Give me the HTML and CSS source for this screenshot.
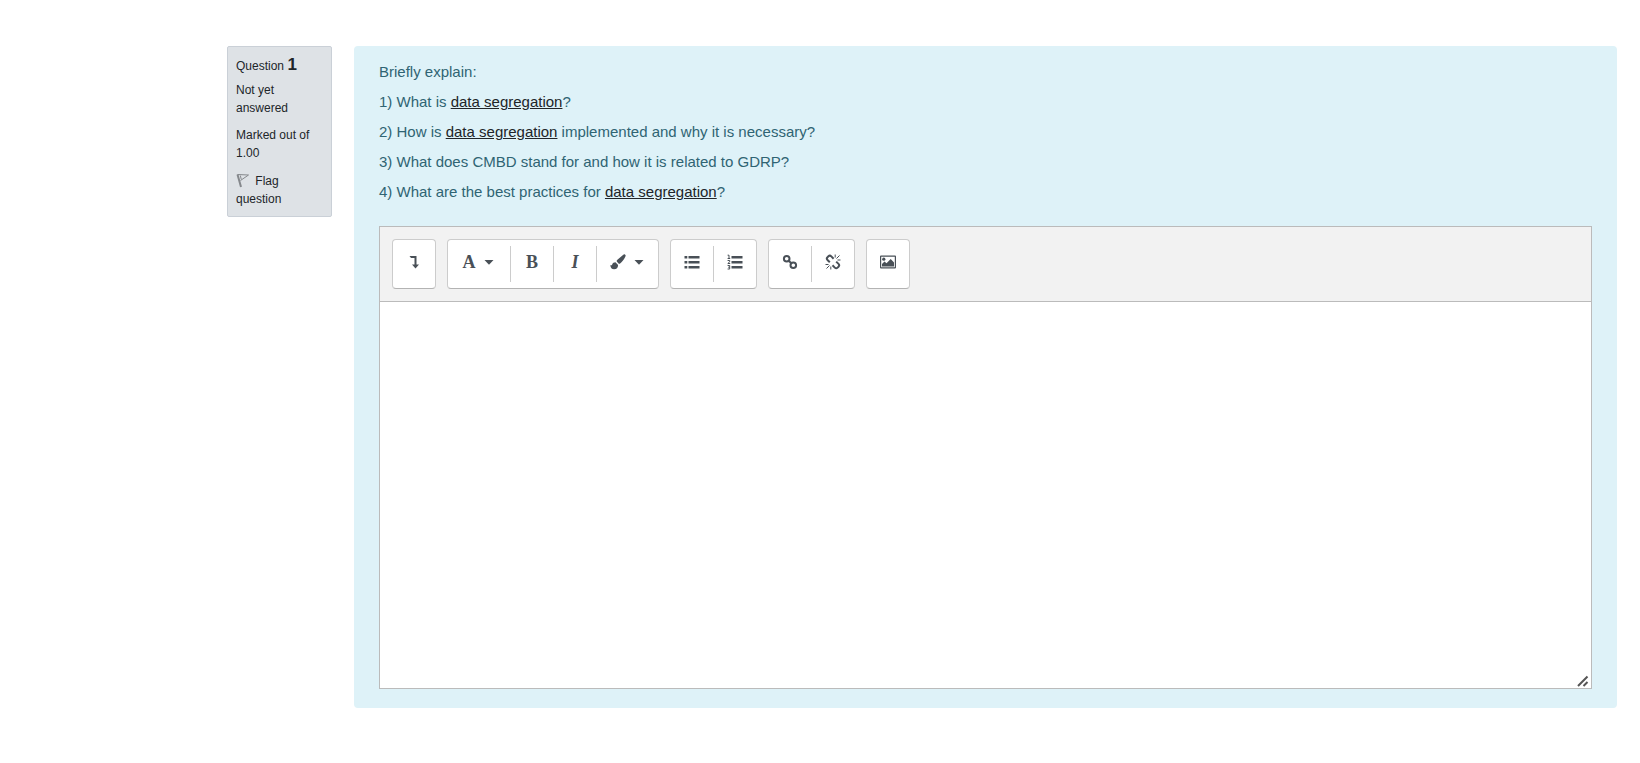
FILE: index.html
```html
<!DOCTYPE html>
<html lang="en">
<head>
    <meta charset="UTF-8">
    <meta name="viewport" content="width=device-width, initial-scale=1.0">
    <title>Quiz</title>
    <link rel="stylesheet" href="styles.css">
</head>
<body>

<main class="question">
    <aside class="info">
        <h3 class="no">Question <span class="qno">1</span></h3>
        <div class="state">Not yet answered</div>
        <div class="grade">Marked out of 1.00</div>
        <button type="button" class="flag">
            <svg class="flag-icon" width="14" height="15" viewBox="0 0 14 15" fill="none" stroke="#85888c">
                <path d="M1.500 1.500L5 14" stroke-width="2"/>
                <path d="M1.500 1.500L12.500 2L4.500 7.500M4.300 2.500L5.300 6.500"/>
            </svg>
            Flag question
        </button>
    </aside>

    <section class="formulation">
        <div class="qtext">
            <p>Briefly explain:</p>
            <p>1) What is <a href="#">data segregation</a>?</p>
            <p>2) How is <a href="#">data segregation</a> implemented and why it is necessary?</p>
            <p>3) What does CMBD stand for and how it is related to GDRP?</p>
            <p>4) What are the best practices for <a href="#">data segregation</a>?</p>
        </div>

        <div class="editor">
            <div class="toolbar">
                <div class="group">
                    <button type="button" aria-label="Show more buttons">
                        <svg width="16" height="16" viewBox="0 0 16 16"><path d="M3.500 2H10.500V10.500H13L9.500 14.500L6 10.500H8.500V4H5z"/></svg>
                    </button>
                </div>
                <div class="group">
                    <button type="button" class="menu" aria-label="Paragraph styles">
                        <span class="letter">A</span>
                        <svg width="10" height="16" viewBox="0 0 10 16"><path d="M0.500 6H9.500L5 10.800z"/></svg>
                    </button>
                    <button type="button" aria-label="Bold"><span class="letter">B</span></button>
                    <button type="button" aria-label="Italic"><span class="letter italic">I</span></button>
                    <button type="button" class="menu" aria-label="Font colour">
                        <svg width="16" height="16" viewBox="0 0 16 16"><path d="M14.900 0.400C15.900 0.800 15.800 1.800 15.300 2.700C13.700 5.700 12 8.200 10.100 9.500C9.500 9.900 8.900 9.800 8.300 9.200L7 7.800C6.500 7.200 6.600 6.700 7.100 6.100L13 0.900C13.700 0.300 14.300 0.200 14.900 0.400zM5.500 8.300L8.100 10.900C8.100 13.700 6.600 15.300 4.100 15.300C1.800 15.300 0.400 13.800 0.300 11C1 11.400 1.700 11.600 2.100 10.700C2.700 9.100 3.900 8.300 5.500 8.300z"/></svg>
                        <svg width="10" height="16" viewBox="0 0 10 16"><path d="M0.500 6H9.500L5 10.800z"/></svg>
                    </button>
                </div>
                <div class="group">
                    <button type="button" aria-label="Unordered list">
                        <svg width="16" height="16" viewBox="0 0 16 16"><path d="M0.500 2H3.300V4.600H0.500zM0.500 7H3.300V9.600H0.500zM0.500 12H3.300V14.600H0.500zM4.500 2H15.500V4.500H4.500zM4.500 7H15.500V9.500H4.500zM4.500 12H15.500V14.500H4.500z"/></svg>
                    </button>
                    <button type="button" aria-label="Ordered list">
                        <svg width="16" height="16" viewBox="0 0 16 16">
                            <path d="M4.500 2H15.500V4.500H4.500zM4.500 7H15.500V9.500H4.500zM4.500 12H15.500V14.500H4.500z"/>
                            <path class="line" d="M0.600 1.200H2V4.500M0.600 4.500H3.200M0.600 6.500H2.700V7.800L0.800 9.500H3.200M0.600 11.500H2.700V15H0.600M1.200 13.200H2.700"/>
                        </svg>
                    </button>
                </div>
                <div class="group">
                    <button type="button" aria-label="Link">
                        <svg class="thick" width="16" height="16" viewBox="0 0 16 16"><circle cx="4.700" cy="4.700" r="2.800"/><circle cx="11.300" cy="11.300" r="2.800"/><path d="M6.200 6.200L9.800 9.800"/></svg>
                    </button>
                    <button type="button" aria-label="Unlink">
                        <svg class="thick" width="16" height="16" viewBox="0 0 16 16">
                            <path d="M8.600 4.700L6.300 2.400C5.300 1.400 4.300 1.500 3.400 2.300L2.500 3.200C1.600 4.100 1.600 5.100 2.500 6L4.800 8.300M7.500 11.300L9.800 13.600C10.700 14.500 11.700 14.500 12.600 13.600L13.500 12.700C14.400 11.800 14.400 10.800 13.500 9.900L11.200 7.600"/>
                            <path class="thin" d="M10.200 0.500V3.500M14.500 1.500L11.500 4.500M12.500 6H15.500M0.500 10.500H3.500M4.500 11.500L1.500 14.500M5.800 12.500V15.500"/>
                        </svg>
                    </button>
                </div>
                <div class="group">
                    <button type="button" aria-label="Insert image">
                        <svg width="18" height="16" viewBox="0 0 18 16"><path d="M2 1.500H16Q17 1.500 17 2.500V13.500Q17 14.500 16 14.500H2Q1 14.500 1 13.500V2.500Q1 1.500 2 1.500zM2.200 2.700V13.300H15.800V2.700z" fill-rule="evenodd"/><circle cx="4.800" cy="5.200" r="1.600"/><path d="M3 12.500V10L5.500 7.500L7.500 9.200L11.700 5L15 8.500V12.500z"/></svg>
                    </button>
                </div>
            </div>
            <textarea class="answer" aria-label="Answer text"></textarea>
            <svg class="resize" width="12" height="12" viewBox="0 0 12 12"><path d="M1 11L10.500 1.500M6.500 11L10.500 7"/></svg>
        </div>
    </section>
</main>

</body>
</html>
```

FILE: styles.css
```css
* {
    box-sizing: border-box;
}
body {
    margin: 0;
    background-color: #fff;
    color: #212529;
    font-family: "Liberation Sans", Arial, sans-serif;
    font-size: 15px;
}
.question {
    display: flex;
    align-items: flex-start;
    gap: 22px;
    padding: 46px 23px 46px 227px;
}
.info {
    flex: 0 0 105px;
    padding: 9px 8px 8px;
    background-color: #dee2e6;
    border: 1px solid #cad0d7;
    border-radius: 2px;
    font-size: 12px;
    line-height: 18px;
}
.no {
    margin: 0;
    font-size: 12px;
    font-weight: normal;
    line-height: 18px;
}
.qno {
    font-size: 17px;
    font-weight: bold;
}
.state {
    margin-top: 6px;
}
.grade {
    margin: 9px 0 10px;
}
.flag {
    display: block;
    width: 100%;
    padding: 0;
    border: none;
    background: none;
    color: inherit;
    font: inherit;
    text-align: left;
    cursor: pointer;
}
.flag-icon {
    margin-right: 2px;
    vertical-align: -3px;
}
.formulation {
    flex: 1;
    min-width: 0;
    padding: 15px 25px 19px;
    background-color: #def2f8;
    border-radius: 4px;
    color: #2f6473;
}
.qtext {
    margin-bottom: 23px;
}
.qtext p {
    margin: 0 0 8px;
    line-height: 22px;
}
.qtext p:last-child {
    margin-bottom: 0;
}
.qtext a {
    color: #212529;
    text-decoration: underline;
}
.editor {
    position: relative;
    border: 1px solid #bbb;
}
.toolbar {
    display: flex;
    flex-wrap: wrap;
    gap: 11px;
    padding: 12px;
    background-color: #f2f2f2;
    border-bottom: 1px solid #bbb;
}
.group {
    display: flex;
    padding: 6px 0;
    background-color: #fff;
    border: 1px solid #ccc;
    border-bottom-color: #b3b3b3;
    border-radius: 4px;
}
.group button {
    display: flex;
    align-items: center;
    justify-content: center;
    gap: 8px;
    width: 42px;
    height: 36px;
    padding: 0 0 4px;
    border: none;
    background: none;
    color: #495057;
    cursor: pointer;
}
.group button + button {
    width: 43px;
    border-left: 1px solid #ccc;
}
.group button.menu {
    width: 62px;
    padding-right: 2px;
}
.group svg {
    fill: #495057;
}
.group .thick {
    fill: none;
    stroke: #495057;
    stroke-width: 2;
}
.group .line {
    fill: none;
    stroke: #495057;
    stroke-width: 1;
}
.group .thin {
    stroke-width: 1;
}
.letter {
    font-family: "Liberation Serif", "Times New Roman", serif;
    font-size: 18px;
    font-weight: bold;
    line-height: 20px;
}
.italic {
    font-style: italic;
}
.answer {
    display: block;
    width: 100%;
    height: 386px;
    padding: 8px;
    border: none;
    outline: none;
    background-color: #fff;
    font: inherit;
    resize: none;
}
.resize {
    position: absolute;
    right: 2px;
    bottom: 1px;
    fill: none;
    stroke: #555;
    stroke-width: 2;
}
```
